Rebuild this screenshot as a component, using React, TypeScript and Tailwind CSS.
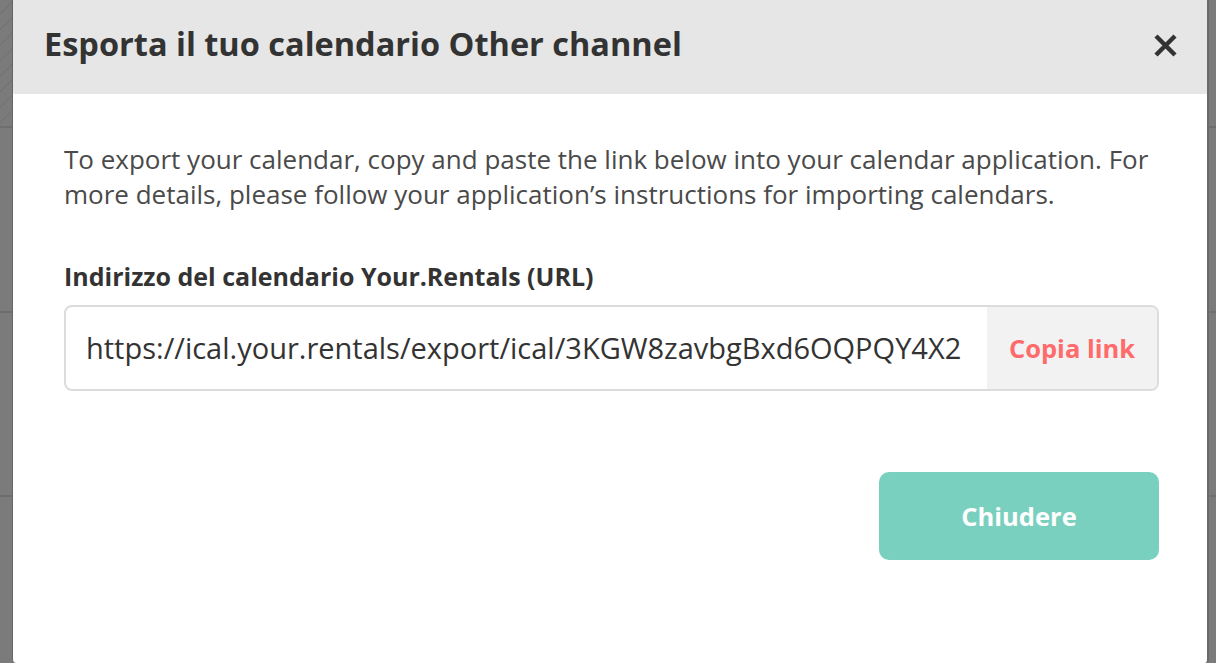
const font = { fontFamily: '"Open Sans", "Liberation Sans", sans-serif' }

const Backdrop = ({ width, hatch }: { width: string; hatch?: boolean }) => (
  <div className={`${width} flex flex-col bg-[#7b7b7b]`}>
    <div
      className={`h-[128px] border-b-2 border-[#6e6e6e] ${
        hatch
          ? 'bg-[repeating-linear-gradient(135deg,#7b7b7b_0px,#7b7b7b_9px,#717171_10px,#7b7b7b_11px)]'
          : ''
      }`}
    />
    <div className="h-[185px] border-b-2 border-[#6e6e6e]" />
    <div className="h-[184px] border-b-2 border-[#6e6e6e]" />
    <div className="flex-1" />
  </div>
)

export default function App() {
  return (
    <div className="flex h-[663px] w-[1216px] overflow-hidden bg-[#7b7b7b]" style={font}>
      <Backdrop width="w-[12px]" hatch />
      <div className="flex w-[1197px] flex-col rounded-b-[4px] border-l border-r-2 border-l-[#666] border-r-[#6a6a6a] bg-white">
        {/* Header */}
        <div className="flex h-[94px] items-center justify-between bg-[#e6e6e6] pl-[31px] pr-[30px]">
          <h2 className="pb-[6px] text-[32.5px] font-bold text-[#333]">
            Esporta il tuo calendario Other channel
          </h2>
          <button className="mb-[4px] text-[#333]">
            <svg width="23" height="23" viewBox="0 0 23 23" fill="none" stroke="currentColor" strokeWidth="4.5">
              <path d="M2 2L21 21M21 2L2 21" />
            </svg>
          </button>
        </div>

        {/* Body */}
        <div className="flex flex-col pl-[51px] pr-[48px] pt-[48px]">
          <p className="whitespace-nowrap text-[26px] leading-[35px] text-[#4a4a4a]">
            To export your calendar, copy and paste the link below into your calendar application. For
            <br />
            more details, please follow your application’s instructions for importing calendars.
          </p>

          <label className="mt-[49px] text-[25px] font-bold leading-[30px] text-[#333]">
            Indirizzo del calendario Your.Rentals (URL)
          </label>

          <div className="mt-[14px] flex h-[86px] overflow-hidden rounded-[8px] border-2 border-[#dcdcdc]">
            <div className="flex flex-1 items-center overflow-hidden whitespace-nowrap pl-[20px] text-[29px] text-[#333]">
              https://ical.your.rentals/export/ical/3KGW8zavbgBxd6OQPQY4X2
            </div>
            <button className="flex w-[170px] shrink-0 items-center justify-center bg-[#f2f2f2] text-[25.5px] font-bold text-[#ff6b6b]">
              Copia link
            </button>
          </div>

          <div className="mt-[81px] flex justify-end">
            <button className="h-[88px] w-[280px] rounded-[10px] bg-[#7ad0be] text-[25.5px] font-bold text-white">
              Chiudere
            </button>
          </div>
        </div>
      </div>
      <Backdrop width="flex-1" />
    </div>
  )
}
